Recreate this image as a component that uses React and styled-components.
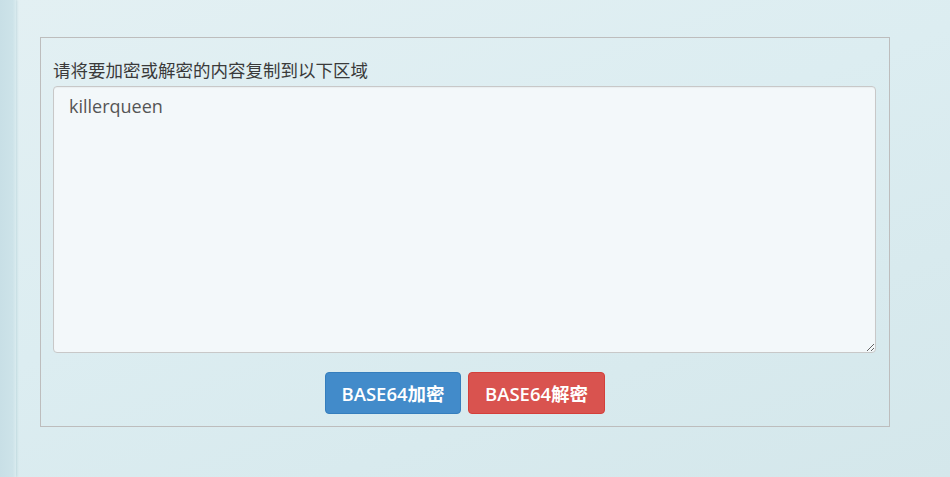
import React, { useState } from "react";
import styled, { createGlobalStyle } from "styled-components";

const GlobalStyle = createGlobalStyle`
  html, body {
    margin: 0;
    padding: 0;
  }
  body {
    font-family: "Open Sans", "Noto Sans CJK SC", sans-serif;
    background: #d9ebef;
  }
`;

const App = () => {
  const [text, setText] = useState("killerqueen");

  return (
    <Page>
      <GlobalStyle />
      <SideStrip />
      <Main>
        <Panel>
          <Label>请将要加密或解密的内容复制到以下区域</Label>
          <TextArea value={text} onChange={(e) => setText(e.target.value)} />
          <Actions>
            <Button $variant="primary">BASE64加密</Button>
            <Button $variant="danger">BASE64解密</Button>
          </Actions>
        </Panel>
      </Main>
    </Page>
  );
};

export default App;

const Page = styled.div`
  display: flex;
  width: 100%;
  min-height: 477px;
  background: linear-gradient(160deg, #e3f0f3 0%, #dcedf1 45%, #d4e7eb 100%);
`;

const SideStrip = styled.div`
  flex: 0 0 16px;
  background: linear-gradient(90deg, #c8dfe6 0%, #cde3e9 80%, #d9ebef 100%);
  box-shadow: 1px 0 2px rgba(140, 180, 190, 0.35);
`;

const Main = styled.div`
  flex: 1;
  padding: 37px 0 0 24px;
`;

const Panel = styled.div`
  width: 824px;
  padding: 20px 12px 12px 12px;
  border: 1px solid #bdbdbd;
  display: flex;
  flex-direction: column;
`;

const Label = styled.div`
  font-size: 17.5px;
  line-height: 24px;
  color: #3a3a3a;
  margin-bottom: 4px;
`;

const TextArea = styled.textarea`
  box-sizing: border-box;
  width: 823px;
  height: 267px;
  padding: 7px 15px;
  border: 1px solid #c8c8c8;
  border-radius: 4px;
  background: #f3f8fa;
  color: #555;
  font-family: "Open Sans", "Noto Sans CJK SC", sans-serif;
  font-size: 18px;
  line-height: 24px;
  resize: vertical;
  outline: none;
  box-shadow: inset 0 1px 1px rgba(0, 0, 0, 0.04);
`;

const Actions = styled.div`
  display: flex;
  justify-content: center;
  gap: 7px;
  margin-top: 19px;
`;

const Button = styled.button`
  height: 42px;
  width: ${(p) => (p.$variant === "primary" ? "136px" : "137px")};
  border-radius: 4px;
  border: 1px solid
    ${(p) => (p.$variant === "primary" ? "#357ebd" : "#d43f3a")};
  background: ${(p) => (p.$variant === "primary" ? "#428bca" : "#d9534f")};
  color: #fff;
  font-family: "Open Sans", "Noto Sans CJK SC", sans-serif;
  font-size: 18.5px;
  font-weight: 600;
  cursor: pointer;
  padding: 0;
`;
